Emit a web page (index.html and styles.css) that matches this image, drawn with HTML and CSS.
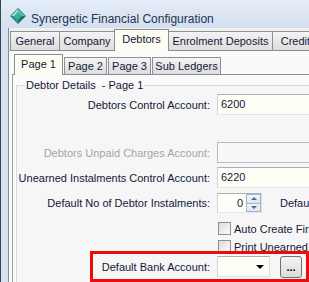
FILE: index.html
```html
<!DOCTYPE html>
<html lang="en">
<head>
    <meta charset="UTF-8">
    <title>Synergetic Financial Configuration</title>
    <link rel="stylesheet" href="styles.css">
</head>
<body>
    <div class="window">
        <div class="titlebar">
            <svg class="app-icon" width="16" height="16" viewBox="0 0 16 16">
                <polygon points="8,0 16,8 8,16 0,8" fill="#1f7d72"/>
                <polygon points="8,1 15,8 8,8" fill="#57c2b1"/>
                <polygon points="8,1 1,8 8,8" fill="#9be3d4"/>
                <polygon points="1,8 8,15 8,8" fill="#2f9a8b"/>
                <polygon points="15,8 8,15 8,8" fill="#1d6f66"/>
                <polygon points="8,4 12,8 8,12 4,8" fill="#3fae9e"/>
            </svg>
            <span class="title">Synergetic Financial Configuration</span>
        </div>

        <div class="client">
            <div class="tab-strip top-strip">
                <div class="tab tab-general">General</div>
                <div class="tab tab-company">Company</div>
                <div class="tab tab-debtors active">Debtors</div>
                <div class="tab tab-enrolment">Enrolment Deposits</div>
                <div class="tab tab-creditors">Creditors</div>
            </div>

            <div class="outer-panel">
                <div class="tab-strip sub-strip">
                    <div class="tab sub-tab tab-page1 active">Page 1</div>
                    <div class="tab sub-tab tab-page">Page 2</div>
                    <div class="tab sub-tab tab-page">Page 3</div>
                    <div class="tab sub-tab tab-ledgers">Sub Ledgers</div>
                </div>

                <div class="inner-panel">
                    <fieldset class="group">
                        <legend>Debtor Details&nbsp; - Page 1</legend>

                        <div class="row row-first">
                            <label class="field-label">Debtors Control Account:</label>
                            <div class="text-box">6200</div>
                        </div>

                        <div class="row row-far">
                            <label class="field-label disabled">Debtors Unpaid Charges Account:</label>
                            <div class="text-box disabled"></div>
                        </div>

                        <div class="row row-near">
                            <label class="field-label">Unearned Instalments Control Account:</label>
                            <div class="text-box">6220</div>
                        </div>

                        <div class="row row-spin">
                            <label class="field-label">Default No of Debtor Instalments:</label>
                            <div class="spin-edit">
                                <span class="spin-value">0</span>
                                <span class="spin-buttons">
                                    <span class="spin-btn"><span class="arrow-up"></span></span>
                                    <span class="spin-btn"><span class="arrow-down"></span></span>
                                </span>
                            </div>
                            <span class="side-label">Default Instalment Date:</span>
                        </div>

                        <div class="row row-check">
                            <span class="field-label"></span>
                            <span class="check-box"></span>
                            <span class="check-text">Auto Create First Instalment</span>
                        </div>

                        <div class="row row-check2">
                            <span class="field-label"></span>
                            <span class="check-box"></span>
                            <span class="check-text">Print Unearned Instalments</span>
                        </div>

                        <div class="row row-bank">
                            <label class="field-label">Default Bank Account:</label>
                            <div class="combo-box"><span class="combo-arrow"></span></div>
                            <button class="ellipsis-btn">...</button>
                        </div>
                    </fieldset>
                </div>
            </div>
        </div>

        <div class="highlight"></div>
    </div>
</body>
</html>
```

FILE: styles.css
```css
html, body {
    margin: 0;
    padding: 0;
}

body {
    width: 309px;
    height: 282px;
    overflow: hidden;
    font-family: "Liberation Sans", Arial, sans-serif;
    font-size: 11px;
    color: #141937;
}

.window {
    position: relative;
    height: 282px;
    border-left: 1px solid #3b4552;
    background: #d6e2f1;
}

/* title bar */
.titlebar {
    height: 28px;
    display: flex;
    align-items: flex-start;
    padding-left: 9px;
    background: linear-gradient(#e4ecf7, #d4e0ef);
}

.app-icon {
    margin-top: 8px;
}

.title {
    margin-left: 5px;
    margin-top: 12px;
    font-size: 12px;
    line-height: 14px;
    color: #1e3251;
}

/* client area */
.client {
    margin-left: 7px;
    height: 254px;
    border-left: 1px solid #858b94;
    background: #f0f0f0;
}

.tab-strip {
    display: flex;
    align-items: flex-end;
    white-space: nowrap;
}

.top-strip {
    height: 21px;
    padding-top: 1px;
    padding-left: 1px;
}

.tab {
    box-sizing: border-box;
    height: 19px;
    line-height: 19px;
    text-align: center;
    border: 1px solid #8d9096;
    border-bottom: none;
    background: linear-gradient(#f4f4f4, #dddddd);
    flex-shrink: 0;
}

.tab.active {
    position: relative;
    z-index: 1;
    height: 22px;
    margin-bottom: -1px;
    line-height: 19px;
    background: #fcfcf2;
    border-color: #898d96;
}

.tab-general { width: 50px; }
.tab-company { width: 55px; border-left: none; }
.tab-debtors { width: 55px; margin: 0 -1px; }
.tab-enrolment { width: 105px; }
.tab-creditors { width: 60px; border-left: none; padding-left: 1px; }

.outer-panel {
    height: 231px;
    border-top: 1px solid #898c95;
    border-left: 1px solid #fdfdfd;
    padding-left: 2px;
    background: #fafafa;
}

.sub-strip {
    height: 20px;
    padding-top: 3px;
    padding-left: 4px;
}

.sub-tab {
    height: 17px;
    line-height: 16px;
}

.sub-tab.active {
    height: 21px;
    line-height: 19px;
}

.tab-page1 { width: 49px; margin-left: -2px; margin-right: 1px; }
.tab-page { width: 43px; margin-right: 1px; }
.tab-ledgers { width: 69px; }

.inner-panel {
    height: 207px;
    border-top: 1px solid #898c95;
    border-left: 1px solid #9a9da3;
    padding-left: 3px;
    background: #fbfbfb;
}

/* group box */
.group {
    margin: 4px 0 0 0;
    padding: 0;
    height: 230px;
    border: 1px solid #d3dde6;
    border-right: none;
    border-bottom: none;
    background: #f6f6f6;
}

.group legend {
    margin-left: 8px;
    padding: 0 1px;
    line-height: 13px;
}

.row {
    display: flex;
    align-items: center;
    height: 21px;
    white-space: nowrap;
}

.row-first { margin-top: 2px; }
.row-far { margin-top: 27px; }
.row-near { margin-top: 4px; }
.row-spin { margin-top: 5px; height: 20px; }
.row-check { margin-top: 9px; height: 13px; }
.row-check2 { margin-top: 5px; height: 13px; }
.row-bank { margin-top: 3px; }

.field-label {
    flex-shrink: 0;
    width: 193px;
    margin-right: 7px;
    text-align: right;
}

.field-label.disabled {
    color: #a3a5ae;
}

.text-box {
    box-sizing: border-box;
    flex-shrink: 0;
    width: 120px;
    height: 21px;
    line-height: 19px;
    padding-left: 3px;
    border: 1px solid;
    border-color: #a9aeb6 #dbdfe4 #e3e7eb #d0d4da;
    background: #fffef6;
}

.text-box.disabled {
    border-color: #b7b9bd;
    background: #f8f8f8;
}

/* spin edit */
.spin-edit {
    box-sizing: border-box;
    flex-shrink: 0;
    display: flex;
    width: 45px;
    height: 20px;
    border: 1px solid;
    border-color: #a9aeb6 #dbdfe4 #e3e7eb #d0d4da;
    background: #fffef6;
}

.spin-value {
    flex: 1;
    text-align: right;
    line-height: 18px;
    padding-right: 3px;
}

.spin-buttons {
    display: flex;
    flex-direction: column;
    width: 15px;
}

.spin-btn {
    flex: 1;
    display: flex;
    align-items: center;
    justify-content: center;
    border: 1px solid #a7b4c6;
    background: linear-gradient(#f1f5fb, #dbe4f0);
}

.spin-btn + .spin-btn {
    border-top: none;
}

.arrow-up {
    border-left: 3px solid transparent;
    border-right: 3px solid transparent;
    border-bottom: 3px solid #4d6690;
}

.arrow-down {
    border-left: 3px solid transparent;
    border-right: 3px solid transparent;
    border-top: 3px solid #4d6690;
}

.side-label {
    margin-left: 18px;
}

/* check boxes */
.check-box {
    box-sizing: border-box;
    flex-shrink: 0;
    width: 13px;
    height: 13px;
    margin-left: 1px;
    border: 1px solid #8e8f8f;
    background: linear-gradient(135deg, #dcdcdc, #fbfbfb);
}

.check-text {
    margin-left: 3px;
}

/* bank account */
.combo-box {
    box-sizing: border-box;
    position: relative;
    flex-shrink: 0;
    width: 53px;
    height: 21px;
    border: 1px solid;
    border-color: #a9aeb6 #dbdfe4 #e3e7eb #d0d4da;
    background: #fffef6;
}

.combo-arrow {
    position: absolute;
    right: 5px;
    top: 8px;
    border-left: 4px solid transparent;
    border-right: 4px solid transparent;
    border-top: 4px solid #000;
}

.ellipsis-btn {
    box-sizing: border-box;
    width: 22px;
    height: 22px;
    margin-left: 10px;
    padding: 0;
    border: 1px solid #707070;
    border-radius: 3px;
    background: linear-gradient(#f3f3f3, #dcdcdc);
    font-family: "Liberation Sans", Arial, sans-serif;
    font-size: 11px;
    font-weight: bold;
    color: #000;
    line-height: 18px;
}

/* red annotation frame */
.highlight {
    position: absolute;
    left: 89px;
    top: 251px;
    width: 219px;
    height: 31px;
    box-sizing: border-box;
    border: 3px solid #ee0b0b;
}
```
